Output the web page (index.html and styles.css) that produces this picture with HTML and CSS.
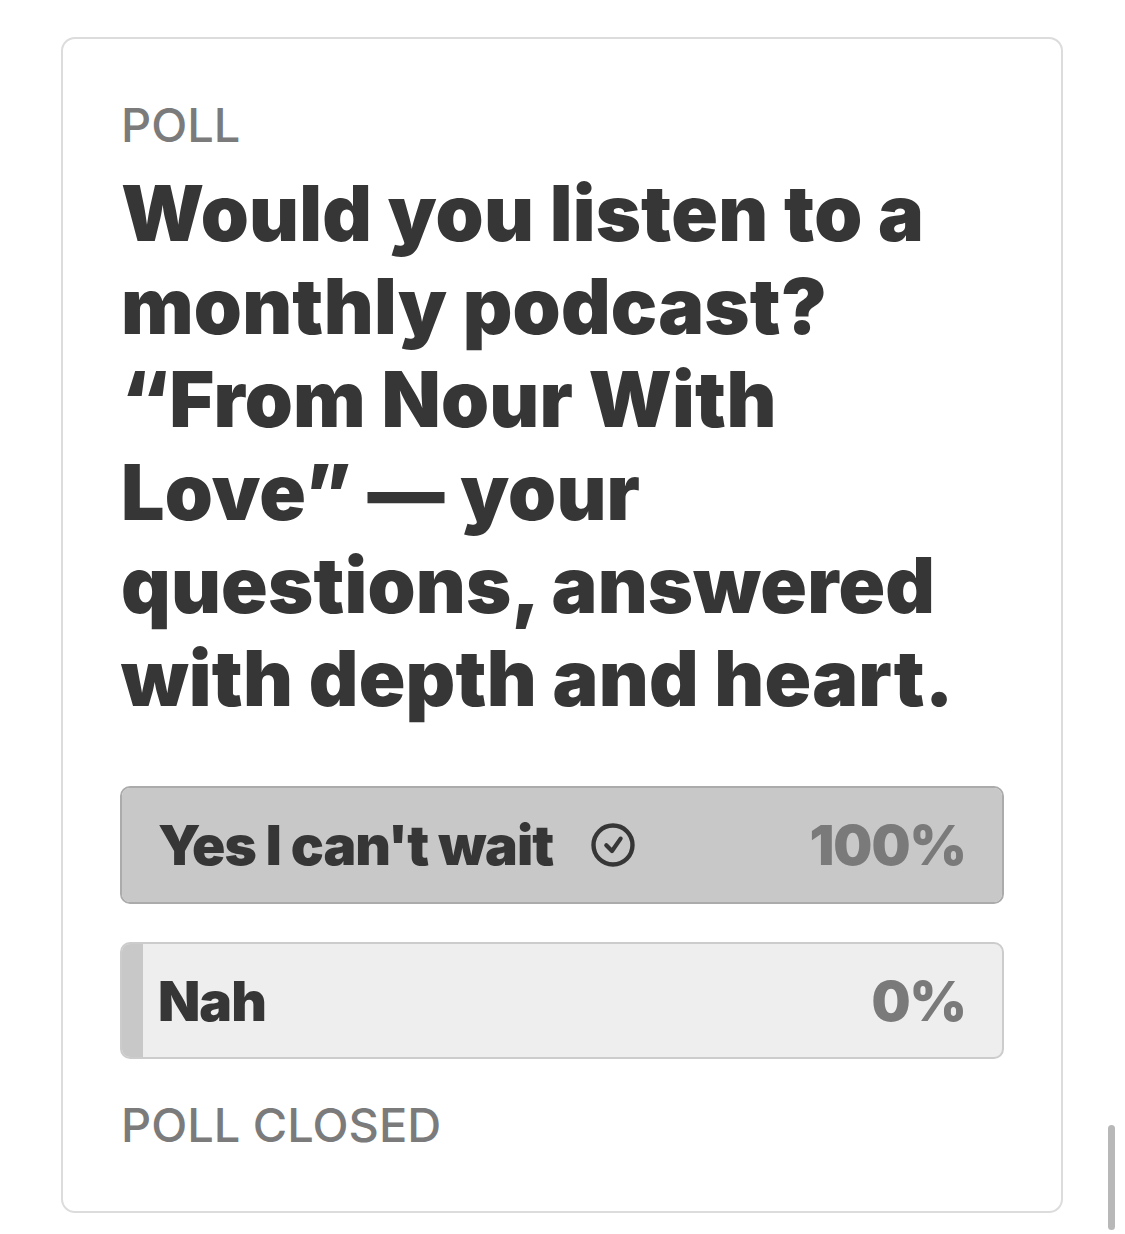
FILE: index.html
```html
<!DOCTYPE html>
<html lang="en">
<head>
    <meta charset="UTF-8">
    <meta name="viewport" content="width=device-width, initial-scale=1.0">
    <title>Poll</title>
    <link rel="stylesheet" href="styles.css">
</head>
<body>
    <div class="poll">
        <div class="poll-label">POLL</div>
        <div class="poll-question">Would you listen to a monthly podcast? “From Nour With Love” — your questions, answered with depth and heart.</div>

        <div class="options">
            <div class="option option-chosen">
                <div class="fill" style="width: 100%"></div>
                <div class="option-name">
                    Yes I can't wait
                    <svg class="check" viewBox="0 0 44 44" width="44" height="44">
                        <circle cx="22" cy="22" r="19.5" fill="none" stroke="#363636" stroke-width="4.4"/>
                        <path d="M15.3 22.2 L21 28 L29.6 15.6" fill="none" stroke="#363636" stroke-width="4.2" stroke-linecap="round" stroke-linejoin="round"/>
                    </svg>
                </div>
                <div class="option-percent">100%</div>
            </div>
            <div class="option">
                <div class="fill" style="width: 0%"></div>
                <div class="option-name">Nah</div>
                <div class="option-percent">0%</div>
            </div>
        </div>

        <div class="poll-label">POLL CLOSED</div>
    </div>

    <!-- scroll indicator -->
    <div class="scrollbar"></div>
</body>
</html>
```

FILE: styles.css
```css
body {
    margin: 0;
    background: #ffffff;
    font-family: Inter, "Noto Sans", sans-serif;
    color: #363636;
    position: relative;
    height: 1234px;
    overflow: hidden;
}
.poll {
    margin: 37px 0 0 61px;
    width: 1002px;
    box-sizing: border-box;
    border: 2px solid #dcdcdc;
    border-radius: 14px;
    padding: 59px 57px 59px 57px;
}
.poll-label {
    font-size: 47px;
    line-height: 54px;
    font-weight: 500;
    color: #7b7b7b;
    padding-left: 1px;
}
.poll-question {
    margin-top: 15px;
    max-width: 840px;
    font-size: 77px;
    line-height: 93px;
    font-weight: 900;
    letter-spacing: 0.2px;
    color: #363636;
    padding-left: 1px;
}
.options {
    display: flex;
    flex-direction: column;
    gap: 38px;
    margin: 61px 0 39px;
}
.option {
    position: relative;
    display: flex;
    align-items: center;
    justify-content: space-between;
    height: 117px;
    box-sizing: border-box;
    border: 2px solid #cccccc;
    border-radius: 10px;
    background: #eeeeee;
    padding: 0 36px 0 36px;
    overflow: hidden;
}
.option-chosen {
    height: 118px;
    border-color: #ababab;
}
.fill {
    position: absolute;
    left: 0;
    top: 0;
    bottom: 0;
    min-width: 21px;
    background: #c8c8c8;
}
.option-name, .option-percent {
    position: relative; /* keep text above the fill */
    font-size: 55px;
    font-weight: 900;
    letter-spacing: -1px;
}
.option-name {
    display: flex;
    align-items: center;
    gap: 38px;
    color: #363636;
}
.option-percent {
    color: #7a7a7a;
}
.check {
    display: block;
}
.scrollbar {
    position: absolute;
    left: 1108px;
    top: 1125px;
    width: 7px;
    height: 105px;
    border-radius: 4px;
    background: #b8b8b8;
}
```
